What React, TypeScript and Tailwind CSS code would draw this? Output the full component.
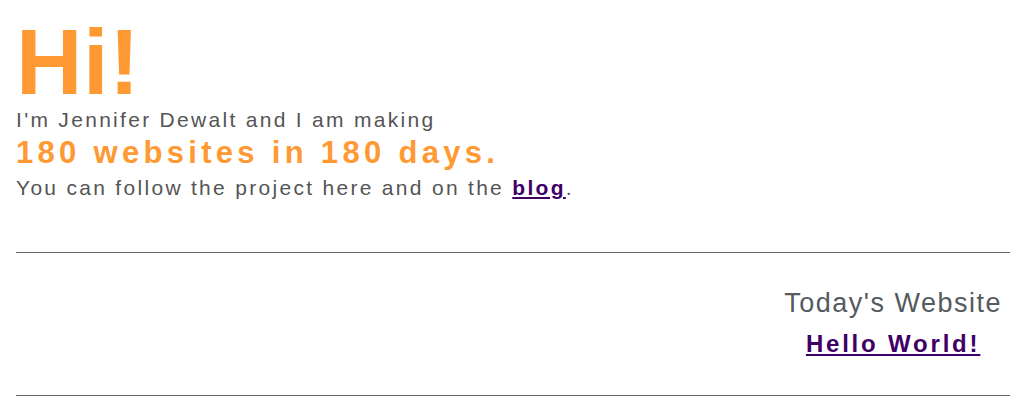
import React from 'react';

export default function App() {
  return (
    <div className="min-h-screen bg-white pl-4 pt-4 font-['Liberation_Sans',Arial,sans-serif] text-[#555]">
      <header>
        <h1 className="text-[92px] font-bold leading-[92px] tracking-[0.5px] text-[#ff9933]">Hi!</h1>
        <p className="text-[21px] leading-[24px] tracking-[2.3px]">I'm Jennifer Dewalt and I am making</p>
        <h2 className="text-[31px] font-bold leading-[42px] tracking-[4.3px] text-[#ff9933]">180 websites in 180 days.</h2>
        <p className="text-[21px] leading-[28px] tracking-[2.3px]">
          You can follow the project here and on the{' '}
          <a href="#" className="font-bold text-[#3f0066] underline">
            blog
          </a>
          .
        </p>
      </header>

      <hr className="mt-[50px] border-[#666]" />

      <section className="flex justify-end pt-[34px] pb-[30px] pr-2">
        <div className="text-center">
          <h3 className="text-[27px] leading-[32px] tracking-[1.5px] text-[#555a5f]">Today's Website</h3>
          <div className="mt-[7px] leading-[36px]">
            <a href="#" className="text-[24px] font-bold tracking-[2.8px] text-[#3f0066] underline">
              Hello World!
            </a>
          </div>
        </div>
      </section>

      <hr className="border-[#666]" />
    </div>
  );
}
